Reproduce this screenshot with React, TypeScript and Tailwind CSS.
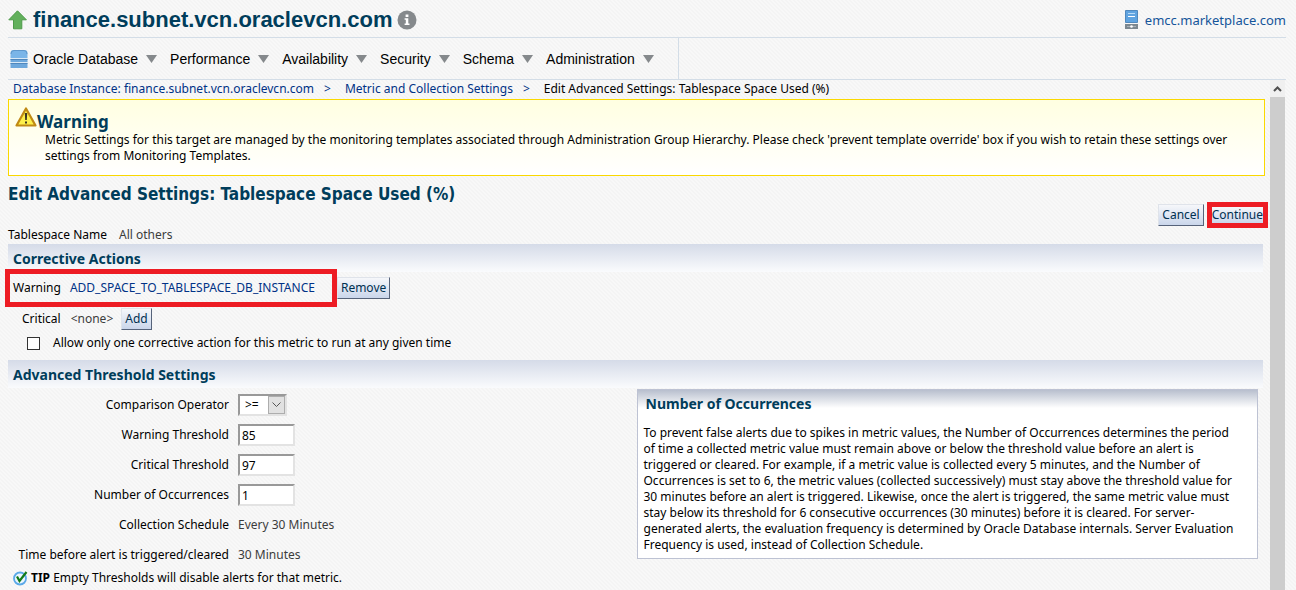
import React from "react";

const menus = ["Oracle Database", "Performance", "Availability", "Security", "Schema", "Administration"];

const thresholds = [
  { id: "warning", label: "Warning Threshold", value: "85" },
  { id: "critical", label: "Critical Threshold", value: "97" },
  { id: "occurrences", label: "Number of Occurrences", value: "1" },
];

function UpArrow() {
  return (
    <svg width="20" height="20" viewBox="0 0 20 20" aria-hidden="true">
      <path d="M9.500 .8 18.400 9.800H13.800V18.800H5.500V9.800H.800Z" fill="#62b05c" stroke="#4d9a49" strokeWidth="1" strokeLinejoin="round" />
    </svg>
  );
}

function InfoIcon() {
  return (
    <svg width="20" height="20" viewBox="0 0 20 20" aria-hidden="true">
      <circle cx="10" cy="10" r="9.5" fill="#85898c" />
      <path d="M8.6 4.6h2.8v2.4H8.6zM7.6 8.3h3.7v5.2h1.2v1.500H7.6v-1.500h1.200V9.800H7.600z" fill="#fff" />
    </svg>
  );
}

function DatabaseIcon() {
  return (
    <svg width="18" height="18" viewBox="0 0 17 18" aria-hidden="true">
      <path d="M0 8V3Q0 0 3 0h11Q17 0 17 3v5Z" fill="#7ab5e8" />
      <path d="M.5 4Q.5.500 3.500.5h10Q16.500.500 16.500 4" fill="none" stroke="#5f97cb" />
      <path d="M0 9h17v3H0zM0 13h17v5H0z" fill="#6ea8dc" />
      <path d="M0 8.500h17M0 12.500h17" stroke="#d9e9f6" />
      <path d="M0 9.500h17M0 13.500h17" stroke="#5088be" />
    </svg>
  );
}

function ServerIcon() {
  return (
    <svg width="13" height="19" viewBox="0 0 13 19" aria-hidden="true">
      <path d="M.5.500h12v12H.5z" fill="#5fa3e0" stroke="#5088bd" />
      <path d="M3 3.500h7" stroke="#b7daf7" />
      <path d="M3 6.500h7" stroke="#fff" />
      <path d="M0 14h13v5H0z" fill="#7b8790" />
      <path d="M2 16.500h9" stroke="#a9b1b8" />
      <circle cx="6.500" cy="16.500" r="1.300" fill="#fff" />
    </svg>
  );
}

function WarningIcon() {
  return (
    <svg className="shrink-0" width="22" height="20" viewBox="0 0 22 20" aria-hidden="true">
      <path d="M11 1.500 20.500 18.500H1.500Z" fill="#fdf04a" stroke="#c08a14" strokeWidth="2.200" strokeLinejoin="round" />
      <path d="M9.800 6h2.400l-.4 7h-1.600zM10 14.500h2v2h-2z" fill="#3b3420" />
    </svg>
  );
}

function TipIcon() {
  return (
    <svg width="16" height="16" viewBox="0 0 16 16" aria-hidden="true">
      <circle cx="7" cy="8.500" r="6" fill="#eaf6ff" stroke="#5ba9e8" strokeWidth="1.800" />
      <path d="M4 6.500 6.500 11 13.500 2" fill="none" stroke="#127a18" strokeWidth="2.200" />
    </svg>
  );
}

const buttonClass =
  "h-[22px] shrink-0 cursor-pointer border border-t-[#dfe3ea] border-l-[#dfe3ea] border-r-[#56637a] border-b-[#56637a] bg-linear-to-b from-[#f6f7fa] to-[#cad6eb] px-[3px] text-[#003050]";

function SectionTitle({ children }: { children: React.ReactNode }) {
  return (
    <h2 className="mr-[2px] h-7 bg-linear-to-b from-[#d5dbe8] to-[#fafbfd] pl-[5px] text-[14px]/[29px] font-bold text-[#003d5b]">
      {children}
    </h2>
  );
}

export default function App() {
  return (
    <div className="h-screen overflow-hidden bg-[#f7f7f7] bg-[linear-gradient(45deg,#f4f4f4_25%,#f8f8f8_25%,#f8f8f8_50%,#f4f4f4_50%,#f4f4f4_75%,#f8f8f8_75%)] bg-[length:4px_4px] pr-[10px] pl-2 font-['Noto_Sans',sans-serif] text-[12px]/4 text-black">
      <div className="flex h-full flex-col">
        <header className="flex h-[38px] shrink-0 items-center justify-between border-b border-[#d3dde7] pt-[2px]">
          <div className="flex items-center gap-[5px]">
            <UpArrow />
            <h1 className="font-['Liberation_Sans',sans-serif] text-[22px]/7 font-bold text-[#003d5b]">
              finance.subnet.vcn.oraclevcn.com
            </h1>
            <InfoIcon />
          </div>
          <a href="#host" className="flex items-center gap-[7px] text-[13px] text-[#15559a]">
            <ServerIcon />
            emcc.marketplace.com
          </a>
        </header>

        <nav className="flex h-[42px] shrink-0 border-b border-[#d3dde7]">
          <div className="flex items-center gap-[13px] border-r border-[#d3dde7] pr-[24px] pl-[2px] font-['Liberation_Sans',sans-serif] text-[14px]">
            {menus.map((name, index) => (
              <button key={name} className="flex cursor-pointer items-center gap-2">
                {index === 0 && <span className="-mr-[3px]"><DatabaseIcon /></span>}
                {name}
                <svg width="11" height="8" viewBox="0 0 11 8" aria-hidden="true">
                  <path d="M0 0h11L5.500 8Z" fill="#85898c" />
                </svg>
              </button>
            ))}
          </div>
        </nav>

        <div className="flex min-h-0 grow">
          <main className="min-w-0 grow pr-[5px]">
            <nav aria-label="Breadcrumb" className="flex h-[19px] items-center gap-[10px] pb-[2px] pl-[5px] text-[#003286]">
              <a href="#instance">Database Instance: finance.subnet.vcn.oraclevcn.com</a>
              <span>&gt;</span>
              <a href="#metrics" className="pl-1">Metric and Collection Settings</a>
              <span>&gt;</span>
              <span className="pl-1 text-black">Edit Advanced Settings: Tablespace Space Used (%)</span>
            </nav>

            <section className="h-[77px] border border-[#fad800] bg-linear-to-b from-[#ffffe1] to-white px-[6px] pt-[7px]">
              <div className="flex h-[25px] items-start">
                <WarningIcon />
                <h2 className="pt-[3px] text-[17px]/6 font-bold text-[#003d5b]">Warning</h2>
              </div>
              <p className="pr-3 pl-[30px]">
                Metric Settings for this target are managed by the monitoring templates associated through Administration Group Hierarchy. Please check 'prevent template override' box if you wish to retain these settings over settings from Monitoring Templates.
              </p>
            </section>

            <h1 className="pt-[6px] font-['DejaVu_Sans_Condensed','Noto_Sans',sans-serif] text-[17px]/6 font-bold text-[#003d5b]">
              Edit Advanced Settings: Tablespace Space Used (%)
            </h1>
            <div className="-mr-[3px] -mt-1 flex items-center justify-end gap-[3px]">
              <button className={buttonClass}>Cancel</button>
              <span className="flex border-[5px] border-[#ed1c24]">
                <button className="h-4 cursor-pointer bg-linear-to-b from-[#f6f7fa] to-[#cad6eb] text-[#003050]">Continue</button>
              </span>
            </div>
            <div className="-mt-[1px] flex h-[17px] gap-3">
              <span>Tablespace Name</span>
              <span className="text-[#3c3c3c]">All others</span>
            </div>

            <SectionTitle>Corrective Actions</SectionTitle>
            <div className="-ml-[3px] -mt-[3px] flex h-[38px] items-center">
              <div className="flex h-full items-center gap-[9px] border-[5px] border-[#ed1c24] pl-[3px]">
                <span>Warning</span>
                <a href="#action" className="min-w-[262px] text-[#003286]">ADD_SPACE_TO_TABLESPACE_DB_INSTANCE</a>
              </div>
              <button className={buttonClass}>Remove</button>
            </div>
            <div className="flex h-6 items-center pl-[14px]">
              <span>Critical</span>
              <span className="pr-2 pl-[10px] text-[#3c3c3c]">&lt;none&gt;</span>
              <button className={buttonClass}>Add</button>
            </div>
            <label className="mt-1 flex h-4 items-center gap-[13px] pl-[19px]">
              <input type="checkbox" className="size-[13px] appearance-none border border-[#333] bg-white" />
              Allow only one corrective action for this metric to run at any given time
            </label>

            <div className="mt-[9px]">
              <SectionTitle>Advanced Threshold Settings</SectionTitle>
            </div>
            <div className="flex">
              <div className="w-1/2 shrink-0 pl-[5px] pt-[2px]">
                <div className="grid grid-cols-[minmax(216px,max-content)_1fr] auto-rows-[30px] items-center gap-x-[9px]">
                  <label htmlFor="operator" className="text-right">Comparison Operator</label>
                  <div className="flex">
                    <div className="grid h-[22px] border-2 border-t-[#999] border-l-[#999] border-r-[#e3e3e3] border-b-[#e3e3e3] bg-white">
                      <select id="operator" className="col-start-1 row-start-1 w-[45px] appearance-none pl-[5px]">
                        <option>&gt;=</option>
                      </select>
                      <span className="pointer-events-none col-start-1 row-start-1 flex w-[17px] items-center justify-center justify-self-end border border-[#adadad] bg-[#e1e1e1]">
                        <svg width="9" height="6" viewBox="0 0 9 6" aria-hidden="true">
                          <path d="m.5.500 4 4 4-4" fill="none" stroke="#555" />
                        </svg>
                      </span>
                    </div>
                  </div>
                  {thresholds.map(({ id, label, value }) => (
                    <React.Fragment key={id}>
                      <label htmlFor={id} className="text-right">{label}</label>
                      <input
                        id={id}
                        defaultValue={value}
                        className="h-[22px] w-[57px] border-2 border-t-[#999] border-l-[#999] border-r-[#e3e3e3] border-b-[#e3e3e3] bg-white px-[2px]"
                      />
                    </React.Fragment>
                  ))}
                  <span className="text-right">Collection Schedule</span>
                  <span className="text-[#3c3c3c]">Every 30 Minutes</span>
                  <span className="text-right">Time before alert is triggered/cleared</span>
                  <span className="text-[#3c3c3c]">30 Minutes</span>
                </div>
                <div className="flex h-4 items-center gap-[2px]">
                  <TipIcon />
                  <p><b>TIP</b> Empty Thresholds will disable alerts for that metric.</p>
                </div>
              </div>
              <aside className="mt-[1px] mr-[7px] h-[170px] grow border border-[#bdc2d3] bg-white bg-[linear-gradient(#b8bfce,#fff_18px)] px-[6px]">
                <h3 className="pl-[2px] text-[14px]/7 font-bold text-[#003d5b]">Number of Occurrences</h3>
                <p className="pt-[7px] pr-[10px]">
                  To prevent false alerts due to spikes in metric values, the Number of Occurrences determines the period of time a collected metric value must remain above or below the threshold value before an alert is triggered or cleared. For example, if a metric value is collected every 5 minutes, and the Number of Occurrences is set to 6, the metric values (collected successively) must stay above the threshold value for 30 minutes before an alert is triggered. Likewise, once the alert is triggered, the same metric value must stay below its threshold for 6 consecutive occurrences (30 minutes) before it is cleared. For server-generated alerts, the evaluation frequency is determined by Oracle Database internals. Server Evaluation Frequency is used, instead of Collection Schedule.
                </p>
              </aside>
            </div>
          </main>
          <div className="mr-[1px] w-[15px] shrink-0 bg-[#cdcdcd]" aria-hidden="true">
            <div className="flex h-[17px] items-center justify-center bg-[#f0f0f0]">
              <svg width="9" height="6" viewBox="0 0 9 6">
                <path d="m1 5 3.500-3.500L8 5" fill="none" stroke="#505050" strokeWidth="2" />
              </svg>
            </div>
          </div>
        </div>
      </div>
    </div>
  );
}
